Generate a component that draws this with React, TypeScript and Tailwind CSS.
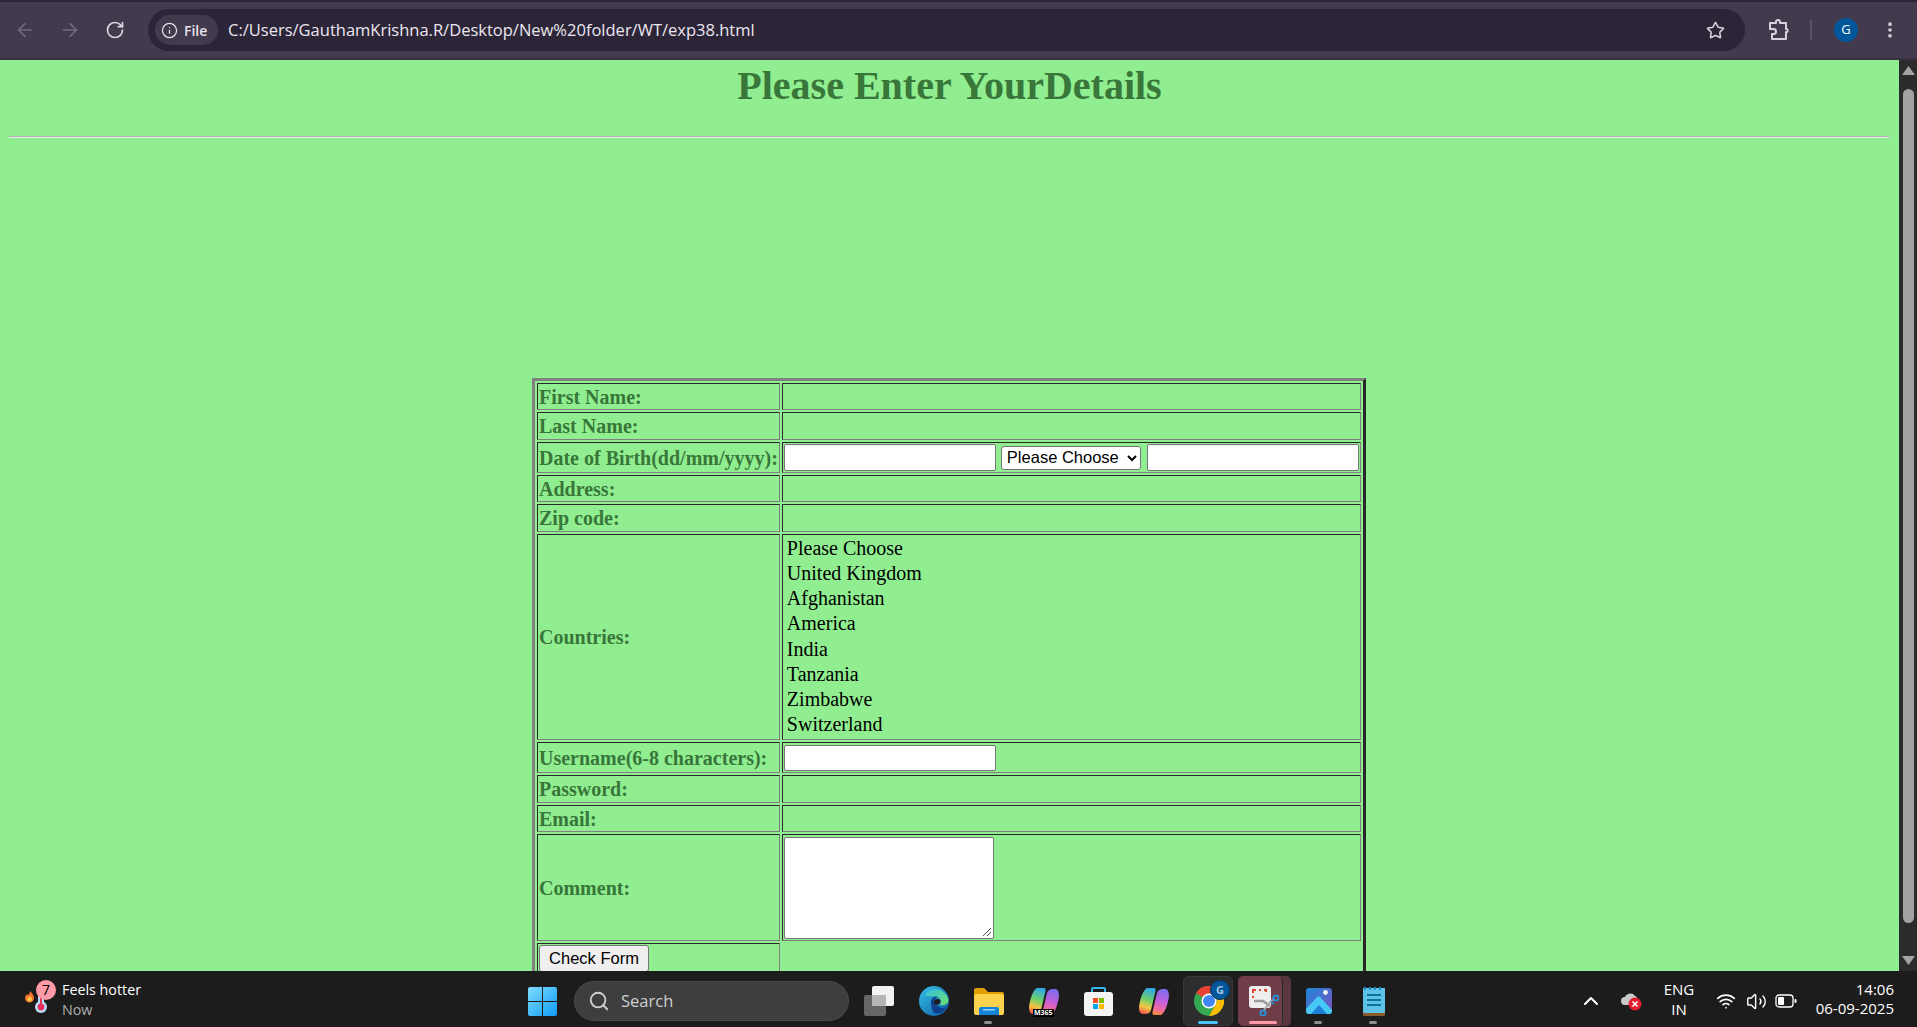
import { ArrowLeft, ArrowRight, RotateCw, Info, Star, EllipsisVertical, Search, ChevronUp, Wifi, Volume2 } from "lucide-react";
import type { ReactNode } from "react";

const cell = "border border-t-[#282828] border-l-[#282828] border-r-[#808080] border-b-[#808080] p-[1px] align-middle";
const labelCell = cell + " text-[20px] leading-[22px] font-bold text-[#38763a] whitespace-nowrap w-[243px]";
const inputClass = "bg-white border border-[#767676] rounded-[2px] block";

const countries = ["Please Choose", "United Kingdom", "Afghanistan", "America", "India", "Tanzania", "Zimbabwe", "Switzerland"];

function TextRow({ label, height }: { label: string; height: string }) {
  return (
    <tr className={height}>
      <td className={labelCell}>{label}</td>
      <td className={cell}></td>
    </tr>
  );
}

function FormTable() {
  return (
    <table className="w-[833px] ml-[532px] border-separate border-spacing-[2px] border-[3px] border-t-[#808080] border-l-[#808080] border-r-[#282828] border-b-[#282828] font-['Liberation_Serif',serif]">
      <tbody>
        <TextRow label="First Name:" height="h-[27px]" />
        <TextRow label="Last Name:" height="h-[28px]" />
        <tr className="h-[31px]">
          <td className={labelCell}>Date of Birth(dd/mm/yyyy):</td>
          <td className={cell}>
            <div className="flex items-center">
              <div className={inputClass + " w-[212px] h-[27px]"}></div>
              <div className="ml-[5px] w-[140px] h-[24px] bg-white border border-[#767676] rounded-[3px] flex items-center justify-between pl-[5px] pr-[2px] font-['Liberation_Sans',sans-serif] text-[16.5px] text-black">
                <span>Please Choose</span>
                <svg width="12" height="12" viewBox="0 0 12 12"><path d="M2 4l4 4 4-4" fill="none" stroke="#000" strokeWidth="2" /></svg>
              </div>
              <div className={inputClass + " ml-[6px] w-[212px] h-[27px]"}></div>
            </div>
          </td>
        </tr>
        <TextRow label="Address:" height="h-[27px]" />
        <TextRow label="Zip code:" height="h-[28px]" />
        <tr className="h-[206px]">
          <td className={labelCell}>Countries:</td>
          <td className={cell + " pl-[4px] pb-[2px] text-[20px] leading-[25.1px] text-black"}>
            {countries.map((c) => (
              <div key={c}>{c}</div>
            ))}
          </td>
        </tr>
        <tr className="h-[31px]">
          <td className={labelCell}>Username(6-8 characters):</td>
          <td className={cell}>
            <div className={inputClass + " w-[212px] h-[26px]"}></div>
          </td>
        </tr>
        <TextRow label="Password:" height="h-[28px]" />
        <TextRow label="Email:" height="h-[27px]" />
        <tr className="h-[107px]">
          <td className={labelCell}>Comment:</td>
          <td className={cell}>
            <div className={inputClass + " relative w-[210px] h-[102px]"}>
              <svg className="absolute right-[1px] bottom-[1px]" width="10" height="10" viewBox="0 0 10 10">
                <path d="M1 9l8-8M5 9l4-4" stroke="#555" strokeWidth="1" />
              </svg>
            </div>
          </td>
        </tr>
        <tr className="h-[30px]">
          <td className={cell + " align-top"}>
            <button className="block w-[110px] h-[27px] pb-[2px] bg-[#efefef] border border-[#767676] rounded-[3px] font-['Liberation_Sans',sans-serif] text-[16.5px] leading-[20px] text-black">Check Form</button>
          </td>
          <td></td>
        </tr>
      </tbody>
    </table>
  );
}

function ExtensionIcon() {
  return (
    <svg width="22" height="22" viewBox="0 0 22 22" fill="none" stroke="#d8d2de" strokeWidth="2" strokeLinejoin="round">
      <path d="M2 4h6V3a2 2 0 0 1 4 0v1h6v6h1a2 2 0 0 1 0 3h-1v7H4v-5h1.500a2.500 2.500 0 0 0 0-5H2z" />
    </svg>
  );
}

function Toolbar() {
  return (
    <div className="h-[60px] shrink-0 bg-[#433a4d] border-t-2 border-t-[#2c2537] border-b-2 border-b-[#3a3243] flex items-center font-['Open_Sans',sans-serif]">
      <div className="w-[148px] flex items-center text-[#75697f] shrink-0 pl-[14px] gap-[23px]">
        <ArrowLeft size={22} strokeWidth={1.8} />
        <ArrowRight size={22} strokeWidth={1.8} />
        <RotateCw size={20} strokeWidth={2} className="text-[#ddd6e4] ml-[1px]" />
      </div>
      <div className="w-[1597px] h-[42px] bg-[#2c2537] rounded-full flex items-center pl-[7px] pr-[20px] shrink-0">
        <div className="w-[63px] h-[30px] bg-[#433a4d] rounded-full flex items-center pl-[6px] gap-[6px] text-[#e8e2ee]">
          <Info size={17} strokeWidth={1.8} />
          <span className="text-[14px] font-semibold">File</span>
        </div>
        <span className="ml-[10px] text-[16.5px] text-[#ebe6f0]">C:/Users/GauthamKrishna.R/Desktop/New%20folder/WT/exp38.html</span>
        <Star size={19} strokeWidth={2} className="ml-auto text-[#d8d2de]" />
      </div>
      <div className="ml-[23px]"><ExtensionIcon /></div>
      <div className="ml-[20px] w-[2px] h-[20px] bg-[#5b5266]"></div>
      <div className="ml-[22px] w-[24px] h-[24px] rounded-full bg-[#01579b] text-white text-[13px] flex items-center justify-center">G</div>
      <EllipsisVertical size={20} strokeWidth={2.4} className="ml-[22px] text-[#d8d2de]" />
    </div>
  );
}

function Scrollbar() {
  return (
    <div className="w-[18px] shrink-0 bg-[#2b2b2b] flex flex-col items-center">
      <svg className="mt-[6px]" width="13" height="10" viewBox="0 0 13 10"><path d="M6.5 0L13 9H0z" fill="#a3a3a3" /></svg>
      <div className="mt-[13px] w-[11px] h-[834px] bg-[#a3a3a3] rounded-full"></div>
      <svg className="mt-auto mb-[5px]" width="13" height="10" viewBox="0 0 13 10"><path d="M0 0h13L6.5 9z" fill="#a3a3a3" /></svg>
    </div>
  );
}

function WinLogo() {
  return (
    <svg width="29" height="29" viewBox="0 0 29 29">
      <defs>
        <linearGradient id="win" x1="0" y1="0" x2="1" y2="1">
          <stop offset="0" stopColor="#7fdcff" />
          <stop offset="1" stopColor="#0f9bf5" />
        </linearGradient>
      </defs>
      <path d="M2 0h12v14H0V2a2 2 0 0 1 2-2zM15 0h12a2 2 0 0 1 2 2v12H15zM0 15h14v14H2a2 2 0 0 1-2-2zM15 15h14v12a2 2 0 0 1-2 2H15z" fill="url(#win)" />
    </svg>
  );
}

function TaskView() {
  return (
    <svg width="30" height="30" viewBox="0 0 30 30">
      <rect x="0" y="9" width="22" height="21" rx="2" fill="#666" />
      <rect x="8" y="0" width="22" height="20" rx="2" fill="#f2f2f2" />
      <rect x="8" y="9" width="14" height="11" fill="#b5b5b5" />
    </svg>
  );
}

function EdgeLogo() {
  return (
    <svg width="30" height="30" viewBox="0 0 30 30">
      <defs>
        <linearGradient id="edgeA" x1="0" y1="0" x2="1" y2="1">
          <stop offset="0" stopColor="#36c3e8" />
          <stop offset="1" stopColor="#0c59a4" />
        </linearGradient>
        <linearGradient id="edgeB" x1="0" y1="0" x2="1" y2="1">
          <stop offset="0" stopColor="#33bfe0" />
          <stop offset="1" stopColor="#6fe06c" />
        </linearGradient>
      </defs>
      <circle cx="15" cy="15" r="15" fill="url(#edgeA)" />
      <path d="M6 9C9 2 24 0 29 12c2 6-4 8-8 7 3-4-1-9-6-9-4 0-7 1-9-1z" fill="url(#edgeB)" />
      <path d="M12 16c0-4 4-6 7-5-4 1-4 7 1 10 3 2 6 1 8-1-3 7-10 9-14 6-1-3-2-6-2-10z" fill="#0e3f8a" />
      <path d="M15 17a4 4 0 0 1 4-4c3 0 3 3 1 5-2 1-4 1-5-1z" fill="#1c1c1c" />
    </svg>
  );
}

function FolderLogo() {
  return (
    <svg width="30" height="27" viewBox="0 0 30 27">
      <path d="M0 2a2 2 0 0 1 2-2h8l4 4h14a2 2 0 0 1 2 2v3H0z" fill="#e0a000" />
      <rect x="0" y="6" width="30" height="21" rx="2" fill="#ffd24d" />
      <path d="M5 27v-6a2 2 0 0 1 2-2h16a2 2 0 0 1 2 2v6z" fill="#1583d8" />
      <rect x="9" y="21" width="12" height="1.6" fill="#8fd0fa" />
    </svg>
  );
}

function CopilotLogo({ id }: { id: string }) {
  return (
    <svg width="30" height="29" viewBox="0 0 30 29">
      <defs>
        <linearGradient id={id + "a"} x1="0.6" y1="0" x2="0.4" y2="1">
          <stop offset="0" stopColor="#2fa8e8" />
          <stop offset="0.45" stopColor="#6fd06a" />
          <stop offset="0.75" stopColor="#f5c542" />
          <stop offset="1" stopColor="#ef5a4a" />
        </linearGradient>
        <linearGradient id={id + "b"} x1="0.6" y1="0" x2="0.4" y2="1">
          <stop offset="0" stopColor="#7a6cf0" />
          <stop offset="0.5" stopColor="#c85fd8" />
          <stop offset="0.8" stopColor="#f06aa0" />
          <stop offset="1" stopColor="#f58a3c" />
        </linearGradient>
      </defs>
      <path d="M8 1h7c1 0 2 1 1.500 3L12 23c-1 3-3 4-6 4H4c-3 0-4-3-4-7C1 12 4 3 8 1z" fill={`url(#${id}a)`} />
      <path d="M22 28h-7c-1 0-2-1-1.500-3L18 6c1-3 3-4 6-4h2c3 0 4 3 4 7-1 8-4 17-8 19z" fill={`url(#${id}b)`} />
    </svg>
  );
}

function StoreLogo() {
  return (
    <svg width="29" height="29" viewBox="0 0 29 29">
      <path d="M8 6V2a1 1 0 0 1 1-1h11a1 1 0 0 1 1 1v4" fill="none" stroke="#38b6f1" strokeWidth="2" />
      <rect x="0" y="5" width="29" height="24" rx="3" fill="#f4f4f4" />
      <rect x="9" y="11" width="5" height="5" fill="#f25022" />
      <rect x="15" y="11" width="5" height="5" fill="#7fba00" />
      <rect x="9" y="17" width="5" height="5" fill="#00a4ef" />
      <rect x="15" y="17" width="5" height="5" fill="#ffb900" />
    </svg>
  );
}

function ChromeLogo() {
  return (
    <svg width="30" height="30" viewBox="0 0 30 30">
      <circle cx="15" cy="15" r="15" fill="#34a853" />
      <path d="M15 0a15 15 0 0 1 13 7.500H15a7.500 7.500 0 0 0-6.500 3.750L2 7A15 15 0 0 1 15 0z" fill="#ea4335" />
      <path d="M28 7.500A15 15 0 0 1 15 30l6.500-11.250A7.500 7.500 0 0 0 21.500 11z" fill="#fbbc04" />
      <circle cx="15" cy="15" r="7.500" fill="#fff" />
      <circle cx="15" cy="15" r="6" fill="#4285f4" />
    </svg>
  );
}

function SnipLogo() {
  return (
    <svg width="30" height="30" viewBox="0 0 30 30">
      <rect x="0" y="0" width="22" height="22" rx="3" fill="#eeeeee" />
      <path d="M4 7V4h3M10 4h2M15 4h2v2M4 10v2" fill="none" stroke="#e2482d" strokeWidth="2" />
      <path d="M5 15h9l7 5" fill="none" stroke="#9a9a9a" strokeWidth="2.500" />
      <path d="M15 24l7-9 3-2" fill="none" stroke="#a9a9a9" strokeWidth="2" />
      <circle cx="27" cy="12" r="2.600" fill="none" stroke="#2b8fd6" strokeWidth="2" />
      <circle cx="14" cy="27" r="2.600" fill="none" stroke="#2b8fd6" strokeWidth="2" />
      <path d="M22 16l3 2" stroke="#2b8fd6" strokeWidth="2" />
    </svg>
  );
}

function PhotosLogo() {
  return (
    <svg width="26" height="26" viewBox="0 0 26 26">
      <defs>
        <linearGradient id="photos" x1="0" y1="0" x2="1" y2="1">
          <stop offset="0" stopColor="#1e88d8" />
          <stop offset="1" stopColor="#7a4fc0" />
        </linearGradient>
      </defs>
      <rect width="26" height="26" rx="3" fill="url(#photos)" />
      <circle cx="19.500" cy="4.500" r="2.400" fill="#f2f2f2" />
      <path d="M0 21L11 9a2 2 0 0 1 3 0l12 13v1a3 3 0 0 1-3 3H3a3 3 0 0 1-3-3z" fill="#45c8f5" />
      <path d="M5 26l8-9 8 9z" fill="#1e7fd6" />
    </svg>
  );
}

function NotepadLogo() {
  return (
    <svg width="22" height="30" viewBox="0 0 22 30">
      <rect x="0" y="2" width="22" height="28" rx="1" fill="#8a5a2b" />
      <rect x="0" y="2" width="22" height="25" rx="1" fill="#5cc3e6" />
      <path d="M2 1v3M7 1v3M12 1v3M17 1v3" stroke="#1a8fc0" strokeWidth="2" />
      <path d="M4 9h14M4 14h14M4 19h14" stroke="#0f6f9c" strokeWidth="2" />
    </svg>
  );
}

function Slot({ children, dot }: { children: ReactNode; dot?: boolean }) {
  return (
    <div className="relative w-[55px] h-[52px] flex items-center justify-center shrink-0">
      {children}
      {dot && <div className="absolute left-[23px] bottom-[3px] w-[8px] h-[3px] rounded-full bg-[#8f8f8f]"></div>}
    </div>
  );
}

function Taskbar() {
  return (
    <div className="h-[56px] shrink-0 bg-[#1c1c1c] flex items-center pt-[4px] font-['Open_Sans',sans-serif] text-white relative">
      <div className="w-[515px] shrink-0 flex items-center pl-[25px] -mt-[3px]">
        <div className="relative w-[37px] h-[40px]">
          <svg className="absolute left-0 top-0" width="26" height="40" viewBox="0 0 26 40">
            <path d="M5 11c2 2 4 4 4 7a4.500 4.500 0 0 1-9 0c0-2 1-3 2-4 0 1 1 1 1 1 1-1 2-2 2-4z" fill="#f0702a" />
            <path d="M5 16c1 1 2 2 2 3a2.500 2.500 0 0 1-5 0c0-1 2-2 3-3z" fill="#ffc24a" />
            <rect x="13" y="6" width="6" height="20" fill="#b9dcf7" />
            <circle cx="16" cy="27" r="6" fill="#b9dcf7" />
            <rect x="15" y="14" width="2" height="12" fill="#e8305a" />
            <circle cx="16" cy="27" r="3.400" fill="#e8305a" />
          </svg>
          <div className="absolute left-[11px] top-0 w-[20px] h-[20px] rounded-full bg-[#ff9aa8] text-black text-[14px] leading-[20px] text-center">7</div>
        </div>
        <div className="text-[14.3px] leading-[20px]">
          <div>Feels hotter</div>
          <div className="text-[#aeaeae]">Now</div>
        </div>
      </div>
      <div className="w-[55px] flex justify-center shrink-0"><WinLogo /></div>
      <div className="ml-[4px] w-[275px] h-[40px] shrink-0 rounded-full bg-[#3e3e3e] border border-[#4a4a4a] flex items-center pl-[13px] gap-[11px] text-[#cfcfcf]">
        <Search size={22} strokeWidth={2} />
        <span className="text-[16.5px]">Search</span>
      </div>
      <div className="ml-[2px] flex items-center shrink-0">
        <Slot><TaskView /></Slot>
        <Slot><EdgeLogo /></Slot>
        <Slot dot><FolderLogo /></Slot>
        <Slot>
          <CopilotLogo id="m365" />
          <span className="absolute left-[17px] top-[34px] bg-black text-white text-[7px] leading-[8px] px-[1px] font-bold">M365</span>
        </Slot>
        <Slot><StoreLogo /></Slot>
        <Slot><CopilotLogo id="copilot" /></Slot>
        <Slot>
          <div className="absolute left-[2px] top-[1px] w-[50px] h-[50px] rounded-[5px] bg-[#2d2d2d] border border-[#383838]"></div>
          <div className="relative"><ChromeLogo /></div>
          <div className="absolute left-[29px] top-[5px] w-[20px] h-[20px] rounded-full bg-[#01579b] border border-[#0a3560] text-[#a9c7e2] text-[11px] font-bold flex items-center justify-center">G</div>
          <div className="absolute left-[17px] bottom-[3px] w-[20px] h-[3px] rounded-full bg-[#4cc2ff]"></div>
        </Slot>
        <Slot>
          <div className="absolute left-[6px] top-[1px] w-[49px] h-[50px] rounded-[5px] bg-[#5a3640]"></div>
          <div className="absolute left-[2px] top-[1px] w-[45px] h-[50px] rounded-[5px] bg-[#6f3d48] border-r border-r-[#2a2a2a]"></div>
          <div className="relative"><SnipLogo /></div>
          <div className="absolute left-[13px] bottom-[3px] w-[28px] h-[3px] rounded-full bg-[#ff9aa8]"></div>
        </Slot>
        <Slot dot><PhotosLogo /></Slot>
        <Slot dot><NotepadLogo /></Slot>
      </div>
      <div className="ml-auto flex items-center pr-[23px]">
        <div className="w-[40px] flex justify-center"><ChevronUp size={24} strokeWidth={2} /></div>
        <div className="w-[40px] flex justify-center">
          <svg width="22" height="20" viewBox="0 0 22 20">
            <path d="M5 14a4 4 0 0 1 0-8c1-4 8-5 10-1 1 0 2 1 2 2-4 0-6 3-6 7z" fill="#c9c9c9" />
            <circle cx="15" cy="13" r="6.500" fill="#e0202c" />
            <path d="M12.500 10.500l5 5m0-5l-5 5" stroke="#fff" strokeWidth="1.500" />
          </svg>
        </div>
        <div className="w-[56px] text-center text-[15px] leading-[20px] -mt-[4px]">
          <div>ENG</div>
          <div>IN</div>
        </div>
        <div className="ml-[4px] w-[30px] flex justify-center"><Wifi size={20} strokeWidth={2} /></div>
        <div className="w-[30px] flex justify-center"><Volume2 size={21} strokeWidth={1.6} /></div>
        <div className="w-[30px] flex justify-center">
          <svg width="22" height="14" viewBox="0 0 22 14">
            <rect x="1" y="1" width="17" height="12" rx="3" fill="none" stroke="#fff" strokeWidth="1.300" />
            <rect x="3" y="3" width="6" height="8" rx="1" fill="#fff" />
            <rect x="19.500" y="5" width="2" height="4" rx="1" fill="#fff" />
          </svg>
        </div>
        <div className="w-[93px] text-right text-[15px] leading-[19px] -mt-[4px]">
          <div>14:06</div>
          <div>06-09-2025</div>
        </div>
      </div>
    </div>
  );
}

export default function App() {
  return (
    <div className="h-screen flex flex-col overflow-hidden">
      <Toolbar />
      <div className="flex-1 min-h-0 flex bg-[#90ee90]">
        <div className="flex-1 min-w-0 overflow-hidden">
          <h1 className="text-center font-['Liberation_Serif',serif] font-bold text-[40px] leading-[46px] text-[#38763a] mt-[3px]">Please Enter YourDetails</h1>
          <div className="ml-[9px] mr-[10px] mt-[27px] h-[2px] bg-[#b4b4b4] border-b border-b-[#ececec]"></div>
          <div className="mt-[240px]">
            <FormTable />
          </div>
        </div>
        <Scrollbar />
      </div>
      <Taskbar />
    </div>
  );
}
